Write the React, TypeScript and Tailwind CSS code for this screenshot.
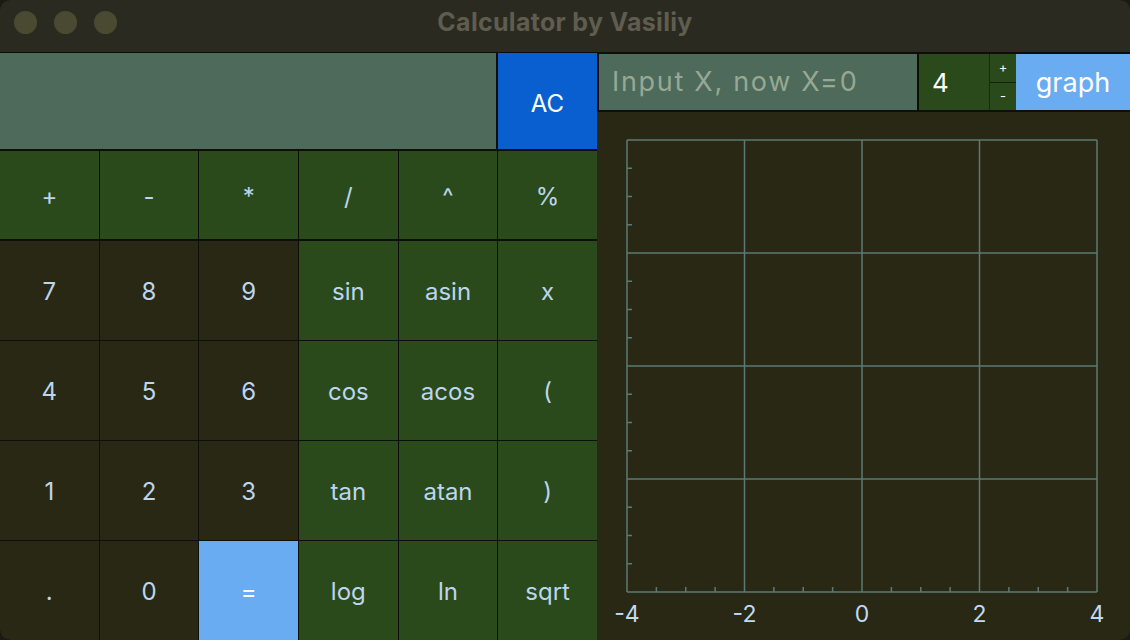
import React from "react"

const topOps = ["+", "-", "*", "/", "^", "%"]

const rows = [
  ["7", "8", "9", "sin", "asin", "x"],
  ["4", "5", "6", "cos", "acos", "("],
  ["1", "2", "3", "tan", "atan", ")"],
  [".", "0", "=", "log", "ln", "sqrt"],
]

function Key({ label, kind }: { label: string; kind: "op" | "num" | "eq" }) {
  const cls =
    kind === "eq"
      ? "bg-[#6aacf2] text-white"
      : kind === "num"
      ? "bg-[#282815] text-[#bcd6ee]"
      : "bg-[#2a4a1b] text-[#bcd6ee]"
  return (
    <button className={`flex items-center justify-center pt-[3px] text-[24px] ${cls}`}>
      {label}
    </button>
  )
}

function Graph() {
  const xs = [628, 745.5, 863, 980.5, 1098]
  const ys = [140, 253, 366, 479, 592]
  const minorY: number[] = []
  for (let i = 0; i < 4; i++) for (let j = 1; j < 4; j++) minorY.push(ys[i] + (j * (ys[i + 1] - ys[i])) / 4)
  const minorX: number[] = []
  for (let i = 0; i < 4; i++) for (let j = 1; j < 4; j++) minorX.push(xs[i] + (j * (xs[i + 1] - xs[i])) / 4)
  const labels = ["-4", "-2", "0", "2", "4"]
  return (
    <svg width="532" height="528" viewBox="598 112 532 528" className="block">
      {xs.map((x) => (
        <line key={"v" + x} x1={x} y1={140} x2={x} y2={592} stroke="#5b7a74" strokeWidth="1.5" />
      ))}
      {ys.map((y) => (
        <line key={"h" + y} x1={628} y1={y} x2={1098} y2={y} stroke="#5b7a74" strokeWidth="1.5" />
      ))}
      {minorY.map((y) => (
        <line key={"my" + y} x1={628} y1={y} x2={633} y2={y} stroke="#5b7a74" strokeWidth="1.5" />
      ))}
      {minorX.map((x) => (
        <line key={"mx" + x} x1={x} y1={592} x2={x} y2={587} stroke="#5b7a74" strokeWidth="1.5" />
      ))}
      {labels.map((l, i) => (
        <text
          key={l}
          x={xs[i]}
          y={622}
          textAnchor="middle"
          fill="#c2daf2"
          fontSize="23"
          fontFamily="Inter, 'Noto Sans', sans-serif"
        >
          {l}
        </text>
      ))}
    </svg>
  )
}

export default function App() {
  return (
    <div className="w-[1130px] h-[640px] bg-[#1b1b14] font-['Inter','Noto_Sans',sans-serif]">
      <div className="w-full h-full rounded-[10px] overflow-hidden flex flex-col bg-[#0f0f0a]">
        {/* title bar */}
        <div className="relative h-[53px] shrink-0 bg-[#2b2a20] border-b border-[#0c0c08] flex items-center justify-center pb-[6px]">
          <div className="absolute left-[14px] top-[11px] flex gap-[17px]">
            <span className="w-[23px] h-[23px] rounded-full bg-[#4a4a32]" />
            <span className="w-[23px] h-[23px] rounded-full bg-[#4a4a32]" />
            <span className="w-[23px] h-[23px] rounded-full bg-[#4a4a32]" />
          </div>
          <span className="text-[25px] font-bold text-[#5e5d4f] tracking-[0.3px]">Calculator by Vasiliy</span>
        </div>

        <div className="flex flex-1 min-h-0">
          {/* calculator */}
          <div className="w-[597px] shrink-0 flex flex-col gap-[2px] bg-[#0e0e0a]">
            <div className="h-[96px] flex gap-[2px]">
              <div className="flex-1 bg-[#4d6a5b]" />
              <button className="w-[99px] bg-[#0a5fd0] text-white text-[24px] flex items-center justify-center pt-[6px]">
                AC
              </button>
            </div>
            <div className="grid grid-cols-6 gap-[1px] h-[88px]">
              {topOps.map((o) => (
                <Key key={o} label={o} kind="op" />
              ))}
            </div>
            <div className="grid grid-cols-6 grid-rows-4 gap-[1px] flex-1">
              {rows.map((r) =>
                r.map((k, ci) => (
                  <Key key={k} label={k} kind={k === "=" ? "eq" : ci < 3 ? "num" : "op"} />
                ))
              )}
            </div>
          </div>

          {/* graph side */}
          <div className="flex-1 flex flex-col bg-[#282815]">
            <div className="h-[59px] shrink-0 flex bg-[#0e0e0a] pl-[2px] pt-[1px] gap-[2px] pb-[2px]">
              <div className="w-[318px] bg-[#4d6a5b] flex items-center px-[13px] text-[27px] tracking-[1.7px] text-[#97a893]">
                Input X, now X=0
              </div>
              <div className="w-[71px] bg-[#2a4a1b] flex items-center pl-[13px] text-[26px] text-white border-r border-[#1a2a12]">
                4
              </div>
              <div className="w-[26px] bg-[#2a4a1b] flex flex-col text-white text-[13px] leading-none -ml-[2px]">
                <span className="flex-1 flex items-center justify-center border-b border-[#12200c]">+</span>
                <span className="flex-1 flex items-center justify-center">-</span>
              </div>
              <button className="flex-1 -ml-[2px] bg-[#6aacf2] text-white text-[27px] flex items-center justify-center pt-[2px]">
                graph
              </button>
            </div>
            <div className="flex-1 min-h-0">
              <Graph />
            </div>
          </div>
        </div>
      </div>
    </div>
  )
}
